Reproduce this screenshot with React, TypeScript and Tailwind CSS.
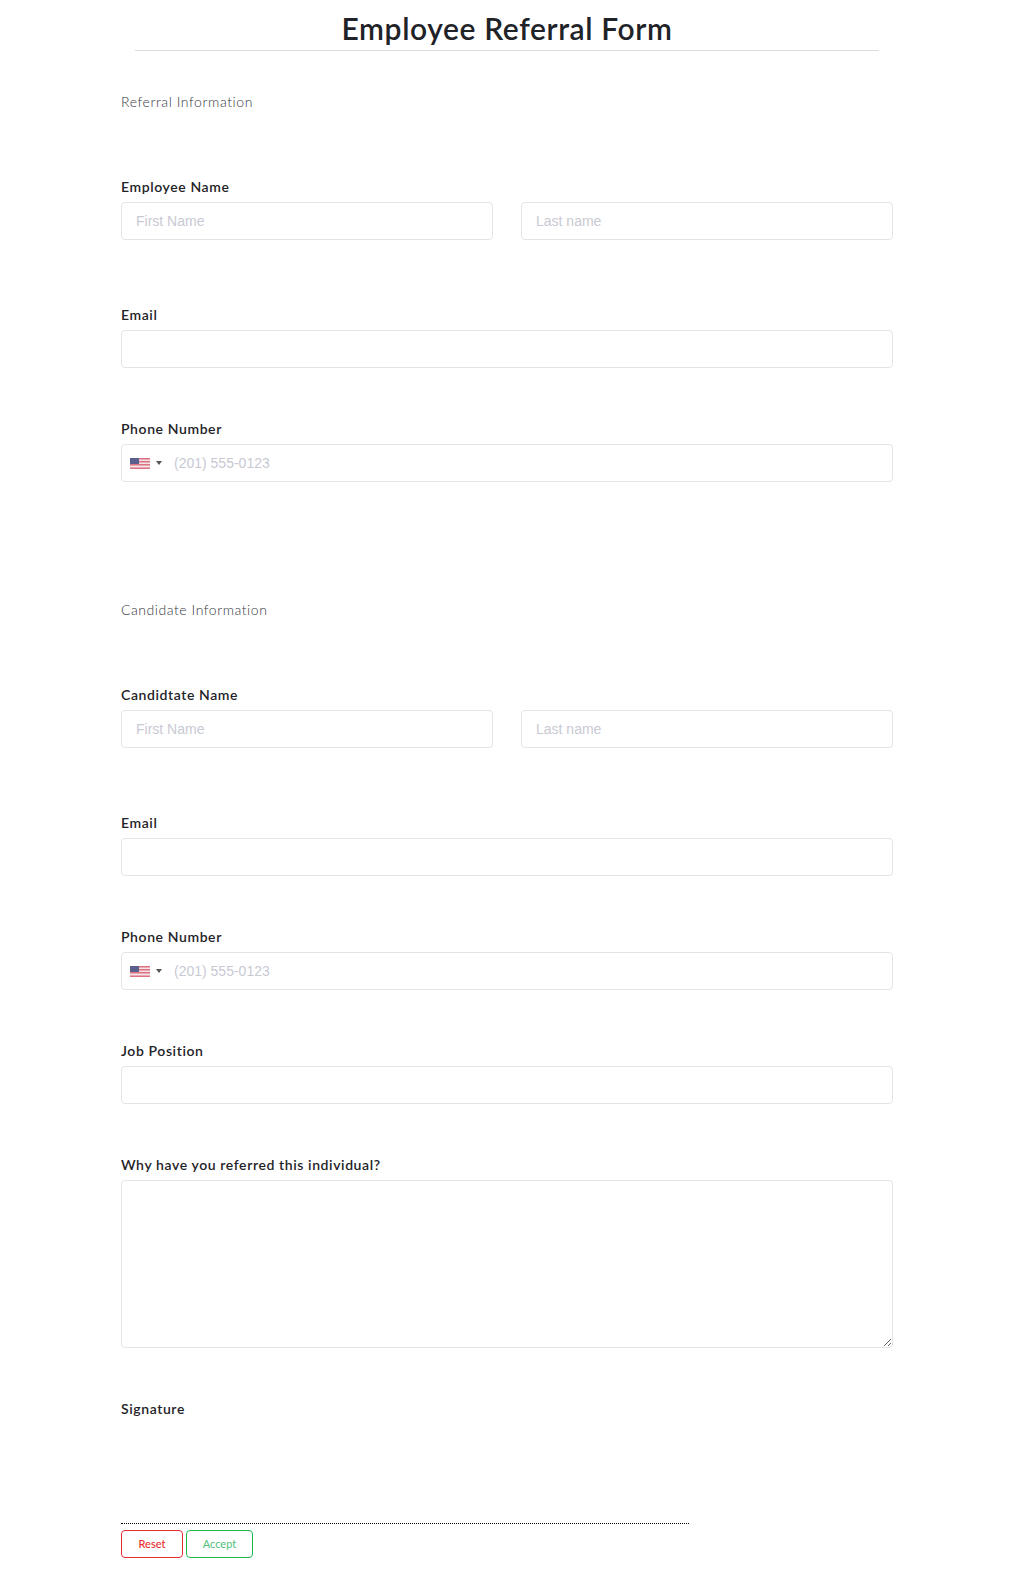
import type { ReactNode } from "react";

const inputClass =
  "block h-[38px] w-full rounded-[4px] border border-[#e3e4e8] bg-white px-[14px] font-['Liberation_Sans',sans-serif] text-[14px] text-[#333] outline-none placeholder:text-[#c8cad3]";

function Label({ children }: { children: ReactNode }) {
  return <label className="mb-[4px] block h-5 text-[14px] leading-[18px] font-semibold tracking-[0.6px] text-[#1f2328]">{children}</label>;
}

function UsFlag() {
  return (
    <svg width="20" height="11" viewBox="0 0 20 11" className="shrink-0">
      <rect width="20" height="11" fill="#f3e3e6" />
      <rect width="20" height="1.5" fill="#dd7282" />
      <rect y="3" width="20" height="1.5" fill="#dd7282" />
      <rect y="6" width="20" height="1.5" fill="#dd7282" />
      <rect y="9.5" width="20" height="1.5" fill="#dd7282" />
      <rect width="9" height="6" fill="#5b5f8e" />
    </svg>
  );
}

function PhoneField({ className }: { className: string }) {
  return (
    <div className={className}>
      <Label>Phone Number</Label>
      <div className="flex h-[38px] items-center rounded-[4px] border border-[#e3e4e8] pl-[8px]">
        <UsFlag />
        <span className="mt-[-1px] ml-[6px] h-0 w-0 border-x-[3px] border-t-[4px] border-x-transparent border-t-[#555]" />
        <input
          placeholder="(201) 555-0123"
          className="ml-[12px] h-full flex-1 bg-transparent font-['Liberation_Sans',sans-serif] text-[14px] outline-none placeholder:text-[#c8cad3]"
        />
      </div>
    </div>
  );
}

function NameField({ label, className }: { label: string; className: string }) {
  return (
    <div className={className}>
      <Label>{label}</Label>
      <div className="grid grid-cols-2 gap-[28px]">
        <input placeholder="First Name" className={inputClass} />
        <input placeholder="Last name" className={inputClass} />
      </div>
    </div>
  );
}

function TextField({ label, className }: { label: string; className: string }) {
  return (
    <div className={className}>
      <Label>{label}</Label>
      <input className={inputClass} />
    </div>
  );
}

export default function App() {
  return (
    <div className="h-[1589px] w-[1014px] bg-white px-[121px] font-['Lato',sans-serif] text-[#1f2328]">
      <div className="mx-[14px] h-[51px] border-b border-[#dcdcdc] text-center">
        <h1 className="text-[30px] leading-[57px] font-semibold tracking-[0.6px]">Employee Referral Form</h1>
      </div>

      <p className="mt-[42px] h-5 text-[14px] leading-[18px] font-light tracking-[0.58px] text-[#33373e]">Referral Information</p>
      <NameField label="Employee Name" className="mt-[65px]" />
      <TextField label="Email" className="mt-[66px]" />
      <PhoneField className="mt-[52px]" />

      <p className="mt-[119px] h-5 text-[14px] leading-[18px] font-light tracking-[0.55px] text-[#33373e]">Candidate Information</p>
      <NameField label="Candidtate Name" className="mt-[65px]" />
      <TextField label="Email" className="mt-[66px]" />
      <PhoneField className="mt-[52px]" />
      <TextField label="Job Position" className="mt-[52px]" />

      <div className="mt-[52px]">
        <Label>Why have you referred this individual?</Label>
        <textarea className="block h-[168px] w-full resize-y rounded-[4px] border border-[#e3e4e8] bg-white px-[15px] outline-none" />
      </div>

      <div className="mt-[52px]">
        <Label>Signature</Label>
        <div className="mt-[103px] w-[568px] border-b-[1px] border-dotted border-black" />
        <div className="mt-[6px] flex gap-[3px]">
          <button className="h-[28px] w-[62px] rounded-[4px] border border-[#e52b2b] text-[11px] font-medium text-[#e52b2b]">Reset</button>
          <button className="h-[28px] w-[67px] rounded-[4px] border border-[#1fb84f] text-[11px] text-[#4fc07a]">Accept</button>
        </div>
      </div>
    </div>
  );
}
